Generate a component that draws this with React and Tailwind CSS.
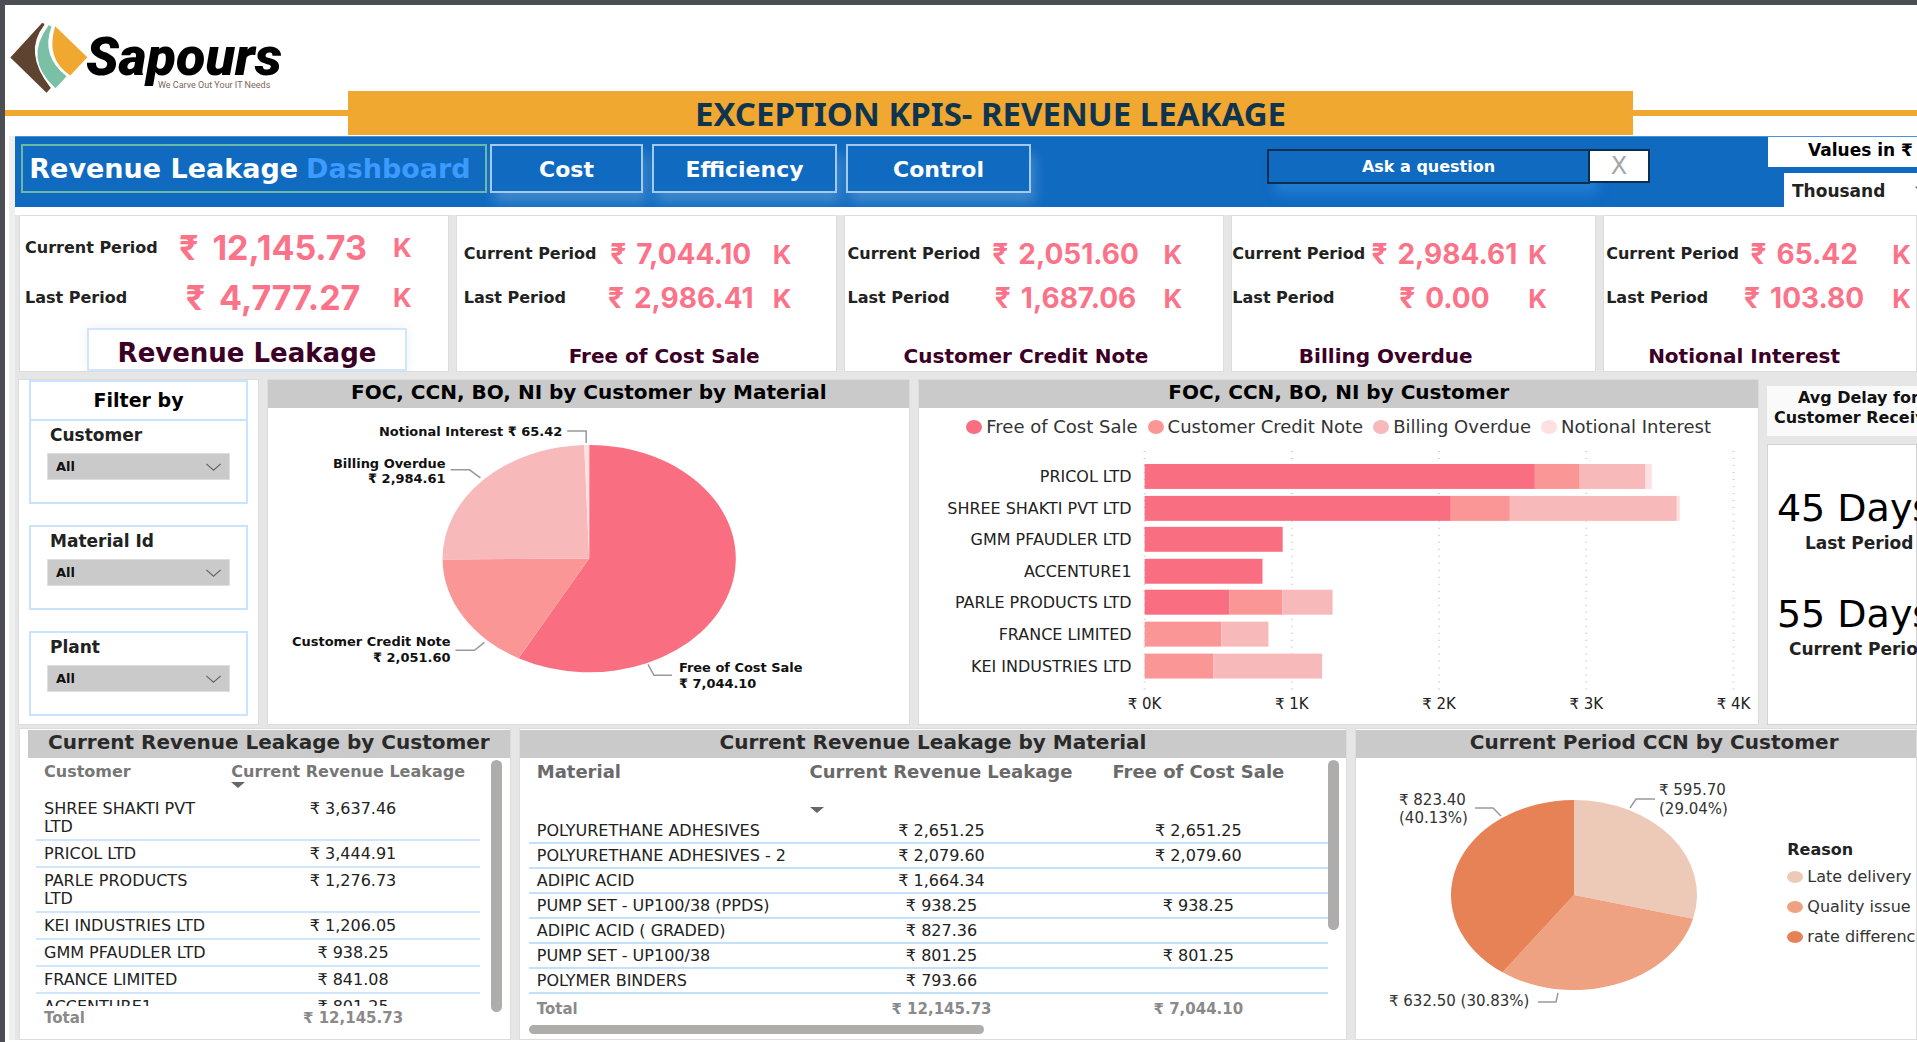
import { ChevronDown } from "lucide-react";
import { clsx } from "clsx";

const kpis = [
  {
    title: "Revenue Leakage",
    current: "12,145.73",
    last: "4,777.27",
    cols: "grid-cols-[142px_212px_auto] pl-[5px]",
    unitPad: "pl-[14px]",
  },
  {
    title: "Free of Cost Sale",
    current: "7,044.10",
    last: "2,986.41",
    cols: "grid-cols-[137px_160px_auto] pl-[7px]",
    unitPad: "pl-3",
    titlePad: "pl-9",
  },
  {
    title: "Customer Credit Note",
    current: "2,051.60",
    last: "1,687.06",
    cols: "grid-cols-[138px_160px_auto] pl-[3px]",
    unitPad: "pl-[18px]",
    titlePad: "pr-4",
  },
  {
    title: "Billing Overdue",
    current: "2,984.61",
    last: "0.00",
    cols: "grid-cols-[138px_148px_auto]",
    unitPad: "pl-[10px]",
    titlePad: "pr-14",
  },
  {
    title: "Notional Interest",
    current: "65.42",
    last: "103.80",
    cols: "grid-cols-[136px_124px_auto] pl-[2px]",
    unitPad: "pl-[26px]",
    titlePad: "pr-8",
  },
];

const filters = [
  { id: "customer", label: "Customer" },
  { id: "material", label: "Material Id" },
  { id: "plant", label: "Plant" },
];

const series = [
  { name: "Free of Cost Sale", color: "#f96e80" },
  { name: "Customer Credit Note", color: "#fa9696" },
  { name: "Billing Overdue", color: "#f7b9ba" },
  { name: "Notional Interest", color: "#fde0e0" },
];

const bars = [
  { name: "PRICOL LTD", values: [2651, 305, 447, 42] },
  { name: "SHREE SHAKTI PVT LTD", values: [2080, 401, 1134, 22] },
  { name: "GMM PFAUDLER LTD", values: [938] },
  { name: "ACCENTURE1", values: [801] },
  { name: "PARLE PRODUCTS LTD", values: [577, 359, 341] },
  { name: "FRANCE LIMITED", values: [0, 521, 320] },
  { name: "KEI INDUSTRIES LTD", values: [0, 466, 740] },
];

const customers = [
  ["SHREE SHAKTI PVT LTD", "₹ 3,637.46"],
  ["PRICOL LTD", "₹ 3,444.91"],
  ["PARLE PRODUCTS LTD", "₹ 1,276.73"],
  ["KEI INDUSTRIES LTD", "₹ 1,206.05"],
  ["GMM PFAUDLER LTD", "₹ 938.25"],
  ["FRANCE LIMITED", "₹ 841.08"],
  ["ACCENTURE1", "₹ 801.25"],
];

const materials = [
  ["POLYURETHANE ADHESIVES", "₹ 2,651.25", "₹ 2,651.25"],
  ["POLYURETHANE ADHESIVES - 2", "₹ 2,079.60", "₹ 2,079.60"],
  ["ADIPIC ACID", "₹ 1,664.34", ""],
  ["PUMP SET - UP100/38 (PPDS)", "₹ 938.25", "₹ 938.25"],
  ["ADIPIC ACID ( GRADED)", "₹ 827.36", ""],
  ["PUMP SET - UP100/38", "₹ 801.25", "₹ 801.25"],
  ["POLYMER BINDERS", "₹ 793.66", ""],
];

const reasons = [
  { name: "Late delivery", value: 595.7, color: "#edc9b7" },
  { name: "Quality issue", value: 632.5, color: "#eea281" },
  { name: "rate difference", value: 823.4, color: "#e78256" },
];

// Pie slices, clockwise from twelve o'clock
const Pie = ({ cx, cy, rx, ry, slices }) => {
  const total = slices.reduce((sum, s) => sum + s.value, 0);
  const point = (v) => {
    const a = (v / total) * 2 * Math.PI;
    return `${cx + rx * Math.sin(a)} ${cy - ry * Math.cos(a)}`;
  };
  let start = 0;

  return slices.map((s) => {
    const end = start + s.value;
    const large = s.value / total > 0.5 ? 1 : 0;
    const d = `M${cx} ${cy} L${point(start)} A${rx} ${ry} 0 ${large} 1 ${point(end)} Z`;
    start = end;
    return <path key={s.color} d={d} fill={s.color} />;
  });
};

const Panel = ({ title, className, headClass, children }) => (
  <section
    className={clsx(
      "min-w-0 bg-white border border-[#dcdcdc] flex flex-col",
      className
    )}
  >
    <h2
      className={clsx(
        "h-7 shrink-0 bg-[#cacaca] text-center font-bold text-[20px] leading-6 whitespace-nowrap",
        headClass
      )}
    >
      {title}
    </h2>
    {children}
  </section>
);

const Logo = () => (
  <div className="flex h-[86px] pl-1">
    <svg viewBox="28 66 236 218" className="mt-4 h-[73px] w-[79px]">
      <path d="M32 175L126 73Q132 70 134 77Q68 160 153 266L140 280Z" fill="#5f4331" />
      <path d="M147 78L155 83Q122 170 200 231L167 267Q70 180 147 78Z" fill="#7ac0a7" />
      <path d="M166 82L262 174L211 229Q136 180 166 82Z" fill="#f0a830" />
    </svg>
    <div className="pt-6 -ml-[2px]">
      <p className="font-[Roboto,sans-serif] text-[54px] leading-[56px] font-black italic text-black">
        Sapours
      </p>
      <p className="-mt-2 pl-[72px] font-[Roboto,sans-serif] text-[9px] leading-4 text-[#7d6658]">
        We Carve Out Your IT Needs
      </p>
    </div>
  </div>
);

const NavButton = ({ children, className }) => (
  <button
    className={clsx(
      "h-[49px] border-2 border-[#a3c9ee] bg-[#0f6ac0] pt-[2px] text-[22px] font-bold text-white shadow-[4px_10px_12px_rgba(255,255,255,0.2)]",
      className
    )}
  >
    {children}
  </button>
);

const Navbar = () => (
  <nav className="flex h-[71px] items-start bg-[#0f6ac0] pl-[6px] border-t border-[#4d92d6]">
    <h1 className="mt-[7px] flex h-[49px] w-[466px] items-center justify-center gap-2 border-2 border-[#68b9a5] pt-[2px] pr-2 text-[27px] font-bold whitespace-nowrap text-white">
      Revenue Leakage <span className="text-[#3b9bff]">Dashboard</span>
    </h1>
    <div className="mt-[7px] ml-[3px] flex gap-[9px]">
      <NavButton className="w-[153px]">Cost</NavButton>
      <NavButton className="w-[185px]">Efficiency</NavButton>
      <NavButton className="w-[185px]">Control</NavButton>
    </div>
    <div className="flex-[236]" />
    <div className="mt-3 flex">
      <button className="h-[35px] w-[323px] border-2 border-[#0a2d52] text-base leading-7 font-bold text-white shadow-[8px_10px_12px_rgba(70,160,250,0.35)]">
        Ask a question
      </button>
      <button className="h-[34px] w-[60px] border-2 border-l-0 border-[#0a2d52] bg-white text-2xl leading-7 text-[#a5a5a5]">
        X
      </button>
    </div>
    <div className="flex-[118]" />
    <div className="flex w-[149px] flex-col gap-[6px] overflow-hidden whitespace-nowrap">
      <label
        htmlFor="unit"
        className="h-[30px] bg-white pl-10 text-[17px] leading-[27px] font-bold text-black"
      >
        Values in ₹
      </label>
      <div className="relative ml-4 h-[34px]">
        <select
          id="unit"
          className="h-[34px] w-[160px] appearance-none bg-white pt-1 pl-2 text-[17px] font-bold text-[#222]"
        >
          <option>Thousand</option>
        </select>
        <ChevronDown className="pointer-events-none absolute top-2 left-[128px] size-4 text-gray-500" />
      </div>
    </div>
  </nav>
);

const KpiRow = ({ label, value, kpi, main }) => (
  <div className={clsx("grid items-center", main ? "h-[50px]" : "h-11", kpi.cols)}>
    <span className="text-base font-bold text-[#222]">{label}</span>
    <span
      className={clsx(
        "flex justify-center font-[Inter,sans-serif] font-bold",
        main ? "gap-[14px] text-[34px]" : "gap-[10px] text-[28px]"
      )}
    >
      <span>₹</span>
      <span>{value}</span>
    </span>
    <span
      className={clsx(
        "font-[Inter,sans-serif] text-[26px] font-bold",
        kpi.unitPad
      )}
    >
      K
    </span>
  </div>
);

const KpiCard = ({ kpi, main }) => (
  <article
    className={clsx(
      "flex min-w-0 flex-col overflow-hidden border border-[#dcdcdc] bg-white whitespace-nowrap text-[#fb7389]",
      main ? "pt-[6px]" : "pt-4"
    )}
  >
    <KpiRow label="Current Period" value={kpi.current} kpi={kpi} main={main} />
    <KpiRow label="Last Period" value={kpi.last} kpi={kpi} main={main} />
    {main ? (
      <h3 className="mt-auto ml-[67px] h-[43px] w-80 border-2 border-[#cfe6fc] text-center text-[26px] leading-[46px] font-bold text-[#3c0027] shadow-[0_0_12px_rgba(0,0,0,0.06)]">
        {kpi.title}
      </h3>
    ) : (
      <h3
        className={clsx(
          "mt-auto text-center text-[20px] leading-[30px] font-bold text-[#3c0027]",
          kpi.titlePad
        )}
      >
        {kpi.title}
      </h3>
    )}
  </article>
);

const Filters = () => (
  <aside className="min-w-0 border border-[#dcdcdc] bg-white px-[10px]">
    <h2 className="h-[39px] border-2 border-b-0 border-[#c8e3fd] text-center text-[19px] leading-9 font-bold">
      Filter by
    </h2>
    <div className="flex flex-col gap-[21px]">
      {filters.map((f) => (
        <div key={f.id} className="h-[85px] border-2 border-[#c8e3fd] px-4">
          <label
            htmlFor={f.id}
            className="block h-8 pl-[3px] text-[17px] leading-7 font-bold text-[#222]"
          >
            {f.label}
          </label>
          <div className="relative">
            <select
              id={f.id}
              className="h-[27px] w-full appearance-none border border-[#dedede] bg-[#cacaca] pl-2 text-[13px] font-bold text-[#111]"
            >
              <option>All</option>
            </select>
            <svg
              viewBox="0 0 18 10"
              className="pointer-events-none absolute top-[10px] right-2 h-[9px] w-[17px]"
            >
              <path d="M1 1L9 8L17 1" fill="none" stroke="#666" strokeWidth="1.4" />
            </svg>
          </div>
        </div>
      ))}
    </div>
  </aside>
);

const MaterialPie = () => (
  <svg
    viewBox="0 0 643 316"
    className="w-full text-[13px] font-bold"
    fill="#111"
  >
    <Pie
      cx={322}
      cy={151}
      rx={147}
      ry={114}
      slices={[
        { value: 7044.1, color: "#f96e80" },
        { value: 2051.6, color: "#fa9696" },
        { value: 2984.61, color: "#f7b9ba" },
        { value: 65.42, color: "#fde0e0" },
      ]}
    />
    <g fill="none" stroke="#999" strokeWidth="1.5">
      <path d="M300 23H319V35" />
      <path d="M183 62H202L213 70" />
      <path d="M188 243H207L217 235" />
      <path d="M381 257L387 268H405" />
    </g>
    <g textAnchor="end">
      <text x="295" y="28">Notional Interest ₹ 65.42</text>
      <text x="178" y="60">Billing Overdue</text>
      <text x="178" y="75">₹ 2,984.61</text>
      <text x="183" y="239">Customer Credit Note</text>
      <text x="183" y="255">₹ 2,051.60</text>
    </g>
    <text x="412" y="265">Free of Cost Sale</text>
    <text x="412" y="281">₹ 7,044.10</text>
  </svg>
);

const CustomerBars = () => {
  const x0 = 226;
  const scale = 0.1475;

  return (
    <>
      <ul className="flex h-[38px] items-center justify-center gap-[10px] text-lg whitespace-nowrap text-[#333]">
        {series.map((s) => (
          <li key={s.name} className="flex items-center gap-1">
            <svg viewBox="0 0 16 14" className="h-[14px] w-4">
              <ellipse cx="8" cy="7" rx="8" ry="7" fill={s.color} />
            </svg>
            {s.name}
          </li>
        ))}
      </ul>
      <svg viewBox="0 0 840 278" className="w-full" fill="#222">
        {[0, 1, 2, 3, 4].map((k) => (
          <g key={k}>
            <path
              d={`M${x0 + k * 147.5} 5V246`}
              stroke="#d0d0d0"
              strokeWidth="2"
              strokeDasharray="1 6"
            />
            <text
              x={x0 + k * 147.5}
              y="264"
              textAnchor="middle"
              className="text-[15px]"
            >
              ₹ {k}K
            </text>
          </g>
        ))}
        {bars.map((bar, row) => {
          const y = Math.round(18 + row * 31.6);
          let x = x0;
          return (
            <g key={bar.name}>
              <text
                x="213"
                y={y + 18}
                textAnchor="end"
                className="text-[16px]"
              >
                {bar.name}
              </text>
              {bar.values.map((v, i) => {
                const width = v * scale;
                x += width;
                return (
                  <rect
                    key={i}
                    x={x - width}
                    y={y}
                    width={width}
                    height="25"
                    fill={series[i].color}
                  />
                );
              })}
            </g>
          );
        })}
      </svg>
    </>
  );
};

const AvgDelay = () => (
  <div className="flex min-w-0 flex-col overflow-hidden whitespace-nowrap">
    <div className="mt-[7px] h-[50px] bg-[#fafafa] pt-[2px] pl-[7px] text-base leading-5 font-bold text-[#111]">
      <p className="pl-6">Avg Delay for</p>
      <p>Customer Receivable</p>
    </div>
    <div className="mt-2 flex-1 border border-[#d2d2d2] bg-white pt-9 pl-[9px] text-[#222]">
      <p className="text-[38px] leading-[54px] text-black">45 Days</p>
      <p className="pl-7 text-[17px] leading-4 font-bold">Last Period</p>
      <p className="mt-9 text-[38px] leading-[54px] text-black">55 Days</p>
      <p className="pl-3 text-[17px] leading-4 font-bold">Current Period</p>
    </div>
  </div>
);

const SortArrow = () => (
  <svg viewBox="0 0 14 6" className="h-[6px] w-[14px]">
    <path d="M0 0H14L7 6Z" fill="#666" />
  </svg>
);

const CustomerTable = () => (
  <div className="relative px-4 text-base text-[#222]">
    <div className="h-[248px] overflow-hidden pr-[14px]">
      <table className="w-full table-fixed border-collapse">
        <thead>
          <tr className="h-[38px] align-top whitespace-nowrap text-[#777]">
            <th className="w-[42%] pt-1 pl-2 text-left text-base leading-5 font-bold">
              Customer
            </th>
            <th className="pt-1 pl-[9px] text-left text-base leading-5 font-bold">
              Current Revenue Leakage
              <SortArrow />
            </th>
          </tr>
        </thead>
        <tbody>
          {customers.map(([name, value]) => (
            <tr key={name} className="border-b-2 border-[#cfe6fc] align-top">
              <td className="pt-1 pr-[7px] pb-[3px] pl-2 leading-[18px]">{name}</td>
              <td className="pt-1 pb-[3px] pl-1 text-center leading-[18px]">{value}</td>
            </tr>
          ))}
        </tbody>
      </table>
    </div>
    <div className="flex pr-[14px] text-[15px] leading-6 font-bold text-[#8a8a8a]">
      <span className="w-[42%] pl-2">Total</span>
      <span className="flex-1 pl-1 text-center">₹ 12,145.73</span>
    </div>
    <div className="absolute top-[2px] right-2 h-[252px] w-[11px] rounded-full bg-[#aeadab]" />
  </div>
);

const MaterialTable = () => (
  <div className="relative pr-[18px] pl-[9px] text-base text-[#222]">
    <table className="w-full table-fixed border-collapse">
      <thead>
        <tr className="h-[60px] align-top whitespace-nowrap text-[#6a6a6a]">
          <th className="w-[34%] pt-[2px] pl-2 text-left text-lg leading-6 font-bold">
            Material
          </th>
          <th className="w-[36%] pt-[2px] pl-[9px] text-left text-lg leading-6 font-bold">
            Current Revenue Leakage
            <span className="block pt-[23px]">
              <SortArrow />
            </span>
          </th>
          <th className="pt-[2px] pr-5 text-center text-lg leading-6 font-bold">
            Free of Cost Sale
          </th>
        </tr>
      </thead>
      <tbody>
        {materials.map(([name, revenue, foc]) => (
          <tr key={name} className="h-[25px] border-b-2 border-[#c4e1fc] leading-[23px]">
            <td className="pl-2 whitespace-nowrap">{name}</td>
            <td className="pr-[6px] text-center">{revenue}</td>
            <td className="pr-5 text-center">{foc}</td>
          </tr>
        ))}
      </tbody>
      <tfoot>
        <tr className="h-8 text-[15px] font-bold text-[#8a8a8a]">
          <td className="pl-2">Total</td>
          <td className="pr-[6px] text-center">₹ 12,145.73</td>
          <td className="pr-5 text-center">₹ 7,044.10</td>
        </tr>
      </tfoot>
    </table>
    <div className="h-[9px] w-[57%] rounded-full bg-[#aeadab]" />
    <div className="absolute top-[2px] right-[7px] h-[170px] w-[11px] rounded-full bg-[#aeadab]" />
  </div>
);

const ReasonPie = () => (
  <div className="flex flex-1 overflow-hidden">
    <svg
      viewBox="0 0 425 280"
      className="h-[280px] w-[425px] shrink-0 text-[15px]"
      fill="#333"
    >
      <Pie cx={218} cy={137} rx={123} ry={95} slices={reasons} />
      <g fill="none" stroke="#999" strokeWidth="1.5">
        <path d="M274 50L280 41H299" />
        <path d="M119 50H137L145 58" />
        <path d="M182 244H200L202 235" />
      </g>
      <text x="303" y="37">₹ 595.70</text>
      <text x="303" y="56">(29.04%)</text>
      <text x="43" y="47">₹ 823.40</text>
      <text x="43" y="65">(40.13%)</text>
      <text x="33" y="248">₹ 632.50 (30.83%)</text>
    </svg>
    <div className="pt-20 pl-[6px] text-base whitespace-nowrap text-[#333]">
      <h3 className="leading-6 font-bold text-[#222]">Reason</h3>
      <ul>
        {reasons.map((r) => (
          <li key={r.name} className="flex h-[30px] items-center gap-1">
            <svg viewBox="0 0 16 12" className="h-3 w-4">
              <ellipse cx="8" cy="6" rx="8" ry="6" fill={r.color} />
            </svg>
            {r.name}
          </li>
        ))}
      </ul>
    </div>
  </div>
);

export default function App() {
  return (
    <div className="h-screen overflow-hidden bg-[#4b4f53] pt-[5px] pl-[5px] font-['DejaVu_Sans','Noto_Sans',sans-serif]">
      <div className="min-h-full bg-white">
        <Logo />
        <div className="grid grid-cols-[343fr_1285fr_284fr] items-center">
          <div className="h-[6px] bg-[#f0a830]" />
          <h1 className="h-11 bg-[#f0a830] text-center font-['Noto_Sans',sans-serif] text-[33px] leading-[46px] font-bold whitespace-nowrap text-[#0f3450]">
            EXCEPTION KPIS- REVENUE LEAKAGE
          </h1>
          <div className="h-[6px] bg-[#f0a830]" />
        </div>

        <main className="ml-1 mt-px border-l-[6px] border-[#efefef] bg-[#e6e6e6]">
          <Navbar />
          <div className="h-2 bg-white" />
          <div className="grid h-[157px] grid-cols-[430fr_381fr_381fr_365fr_314fr] gap-[7px] pl-1">
            {kpis.map((kpi, i) => (
              <KpiCard key={kpi.title} kpi={kpi} main={i === 0} />
            ))}
          </div>

          <div className="mt-[7px] grid h-[346px] grid-cols-[241fr_643fr_840fr_150fr] gap-2 pl-[3px]">
            <Filters />
            <Panel title="FOC, CCN, BO, NI by Customer by Material">
              <MaterialPie />
            </Panel>
            <Panel title="FOC, CCN, BO, NI by Customer">
              <CustomerBars />
            </Panel>
            <AvgDelay />
          </div>

          <div className="mt-[3px] grid h-[312px] grid-cols-[492fr_829fr_562fr] gap-2 pl-1">
            <Panel
              title="Current Revenue Leakage by Customer"
              className="pt-px"
              headClass="ml-2 text-[#2a2a2a]"
            >
              <CustomerTable />
            </Panel>
            <Panel
              title="Current Revenue Leakage by Material"
              className="pt-px"
              headClass="text-[#2a2a2a]"
            >
              <MaterialTable />
            </Panel>
            <Panel
              title="Current Period CCN by Customer"
              className="pt-px"
              headClass="pl-9 text-[#2a2a2a]"
            >
              <ReasonPie />
            </Panel>
          </div>
        </main>
      </div>
    </div>
  );
}
